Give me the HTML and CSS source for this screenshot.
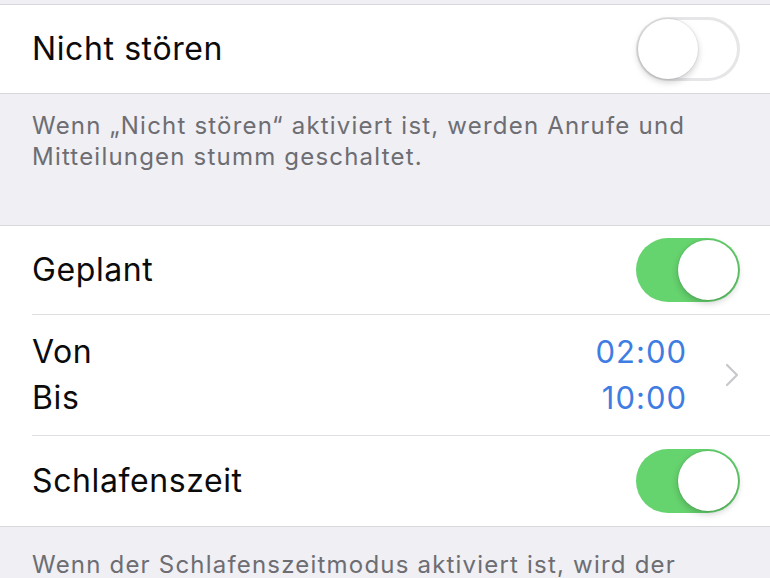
FILE: index.html
```html
<!DOCTYPE html>
<html lang="de">
<head>
<meta charset="utf-8">
<link rel="stylesheet" href="styles.css">
</head>
<body>
<div class="screen">
  <div class="gap-top"></div>
  <div class="group">
    <div class="row">
      <span class="label">Nicht stören</span>
      <span class="toggle"><span class="knob"></span></span>
    </div>
  </div>
  <div class="footer footer-tall">Wenn „Nicht stören“ aktiviert ist, werden Anrufe und Mitteilungen stumm geschaltet.</div>
  <div class="group">
    <div class="row">
      <span class="label">Geplant</span>
      <span class="toggle on"><span class="knob"></span></span>
    </div>
    <div class="row row-tall">
      <div class="stack">
        <span class="label">Von</span>
        <span class="label">Bis</span>
      </div>
      <div class="times">
        <div class="stack right">
          <span class="time">02:00</span>
          <span class="time">10:00</span>
        </div>
        <svg class="chevron" width="16" height="26" viewBox="0 0 16 26"><path d="M3 3 L13 13 L3 23" fill="none" stroke="#c7c7cc" stroke-width="2.2" stroke-linecap="round" stroke-linejoin="round"/></svg>
      </div>
    </div>
    <div class="row row-last">
      <span class="label">Schlafenszeit</span>
      <span class="toggle on"><span class="knob"></span></span>
    </div>
  </div>
  <div class="footer footer-bottom">Wenn der Schlafenszeitmodus aktiviert ist, wird der</div>
</div>
</body>
</html>
```
FILE: styles.css
```css
html, body {
  margin: 0;
  padding: 0;
  background: #efeff4;
}
.screen {
  width: 770px;
  height: 578px;
  overflow: hidden;
  font-family: "Inter", "Roboto", "Liberation Sans", sans-serif;
  background: #efeff4;
}
.gap-top {
  height: 4px;
  background: #efeff4;
}
.group {
  background: #fff;
  border-top: 1px solid #d8d8dc;
  border-bottom: 1px solid #d8d8dc;
}
.row {
  display: flex;
  align-items: center;
  justify-content: space-between;
  height: 88px;
  margin-left: 32px;
  padding-right: 30px;
  border-bottom: 1px solid #dedee2;
}
.row:last-child {
  border-bottom: none;
}
.row-tall {
  height: 120px;
}
.row-last {
  height: 90px;
}
.label {
  font-size: 32px;
  letter-spacing: 0.6px;
  color: #0b0b0b;
  line-height: 46px;
}
.stack {
  display: flex;
  flex-direction: column;
}
.stack.right {
  align-items: flex-end;
}
.times {
  display: flex;
  align-items: center;
  gap: 37px;
}
.time {
  font-size: 31px;
  letter-spacing: 1px;
  color: #3f7de3;
  line-height: 46px;
}
.toggle {
  position: relative;
  width: 104px;
  height: 64px;
  border-radius: 32px;
  background: #fff;
  box-shadow: inset 0 0 0 3px #e6e6e8;
}
.toggle .knob {
  position: absolute;
  top: 2px;
  left: 2px;
  width: 60px;
  height: 60px;
  border-radius: 50%;
  background: #fff;
  box-shadow: 0 3px 7px rgba(0,0,0,0.2), 0 0 0 1px rgba(0,0,0,0.05);
}
.toggle.on {
  background: #65d36e;
  box-shadow: none;
}
.toggle.on .knob {
  left: auto;
  right: 2px;
}
.footer {
  padding: 16px 40px 0 32px;
  font-size: 24px;
  letter-spacing: 1.2px;
  line-height: 31px;
  color: #6d6d72;
}
.footer-tall {
  box-sizing: border-box;
  height: 131px;
}
.footer-bottom {
  padding-top: 22px;
}
```
